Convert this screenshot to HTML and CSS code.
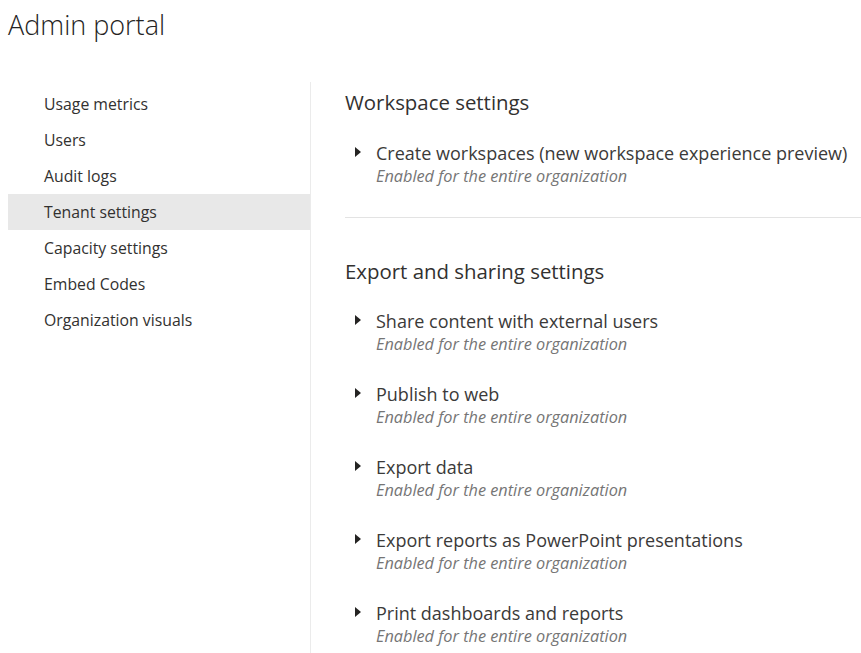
FILE: index.html
```html
<!DOCTYPE html>
<html>
<head>
<meta charset="utf-8">
<link rel="stylesheet" href="styles.css">
</head>
<body>
<h1 class="page-title">Admin portal</h1>
<div class="layout">
  <nav class="sidebar">
    <div class="nav-item">Usage metrics</div>
    <div class="nav-item">Users</div>
    <div class="nav-item">Audit logs</div>
    <div class="nav-item selected">Tenant settings</div>
    <div class="nav-item">Capacity settings</div>
    <div class="nav-item">Embed Codes</div>
    <div class="nav-item">Organization visuals</div>
  </nav>
  <main class="content">
    <section class="section first">
      <h2 class="section-title">Workspace settings</h2>
      <div class="setting">
        <span class="caret"></span>
        <div class="setting-text">
          <div class="setting-name">Create workspaces (new workspace experience preview)</div>
          <div class="setting-state">Enabled for the entire organization</div>
        </div>
      </div>
    </section>
    <hr class="divider">
    <section class="section second">
      <h2 class="section-title">Export and sharing settings</h2>
      <div class="setting">
        <span class="caret"></span>
        <div class="setting-text">
          <div class="setting-name">Share content with external users</div>
          <div class="setting-state">Enabled for the entire organization</div>
        </div>
      </div>
      <div class="setting">
        <span class="caret"></span>
        <div class="setting-text">
          <div class="setting-name">Publish to web</div>
          <div class="setting-state">Enabled for the entire organization</div>
        </div>
      </div>
      <div class="setting">
        <span class="caret"></span>
        <div class="setting-text">
          <div class="setting-name">Export data</div>
          <div class="setting-state">Enabled for the entire organization</div>
        </div>
      </div>
      <div class="setting">
        <span class="caret"></span>
        <div class="setting-text">
          <div class="setting-name">Export reports as PowerPoint presentations</div>
          <div class="setting-state">Enabled for the entire organization</div>
        </div>
      </div>
      <div class="setting">
        <span class="caret"></span>
        <div class="setting-text">
          <div class="setting-name">Print dashboards and reports</div>
          <div class="setting-state">Enabled for the entire organization</div>
        </div>
      </div>
    </section>
  </main>
</div>
</body>
</html>
```
FILE: styles.css
```css
html, body {
  margin: 0;
  padding: 0;
  background: #ffffff;
  overflow: hidden;
}
body {
  font-family: "Open Sans", "Noto Sans", sans-serif;
  color: #333333;
}
.page-title {
  margin: 0;
  padding: 5px 0 0 8px;
  height: 79px;
  box-sizing: border-box;
  font-size: 27px;
  font-weight: 300;
  color: #252423;
  line-height: 40px;
}
.layout {
  display: flex;
  align-items: stretch;
  min-height: 600px;
}
.sidebar {
  width: 302px;
  margin: 3px 0 0 8px;
  padding-top: 4px;
  border-right: 1px solid #ebebeb;
  flex-shrink: 0;
}
.nav-item {
  height: 36px;
  line-height: 36px;
  padding-left: 36px;
  font-size: 15.8px;
  color: #323130;
}
.nav-item.selected {
  background: #e8e8e8;
}
.content {
  flex: 1;
  padding-left: 34px;
  padding-top: 8px;
}
.section-title {
  margin: 0 0 24px 0;
  font-size: 20.4px;
  font-weight: 400;
  color: #323130;
  line-height: 30px;
}
.second .section-title {
  margin-bottom: 23px;
}
.setting {
  display: flex;
  align-items: flex-start;
  padding-left: 10px;
  height: 73px;
}
.first .setting {
  height: auto;
}
.caret {
  flex-shrink: 0;
  width: 0;
  height: 0;
  border-top: 5px solid transparent;
  border-bottom: 5px solid transparent;
  border-left: 6px solid #252423;
  margin-top: 6px;
  margin-right: 15px;
}
.setting-name {
  font-size: 18px;
  line-height: 24px;
  color: #3b3a39;
  white-space: nowrap;
}
.setting-state {
  font-size: 16.3px;
  font-style: italic;
  line-height: 22px;
  color: #757575;
  white-space: nowrap;
}
.divider {
  border: 0;
  border-top: 1px solid #e3e3e3;
  margin: 30px 0 0 0;
}
.second {
  padding-top: 38px;
}
```
